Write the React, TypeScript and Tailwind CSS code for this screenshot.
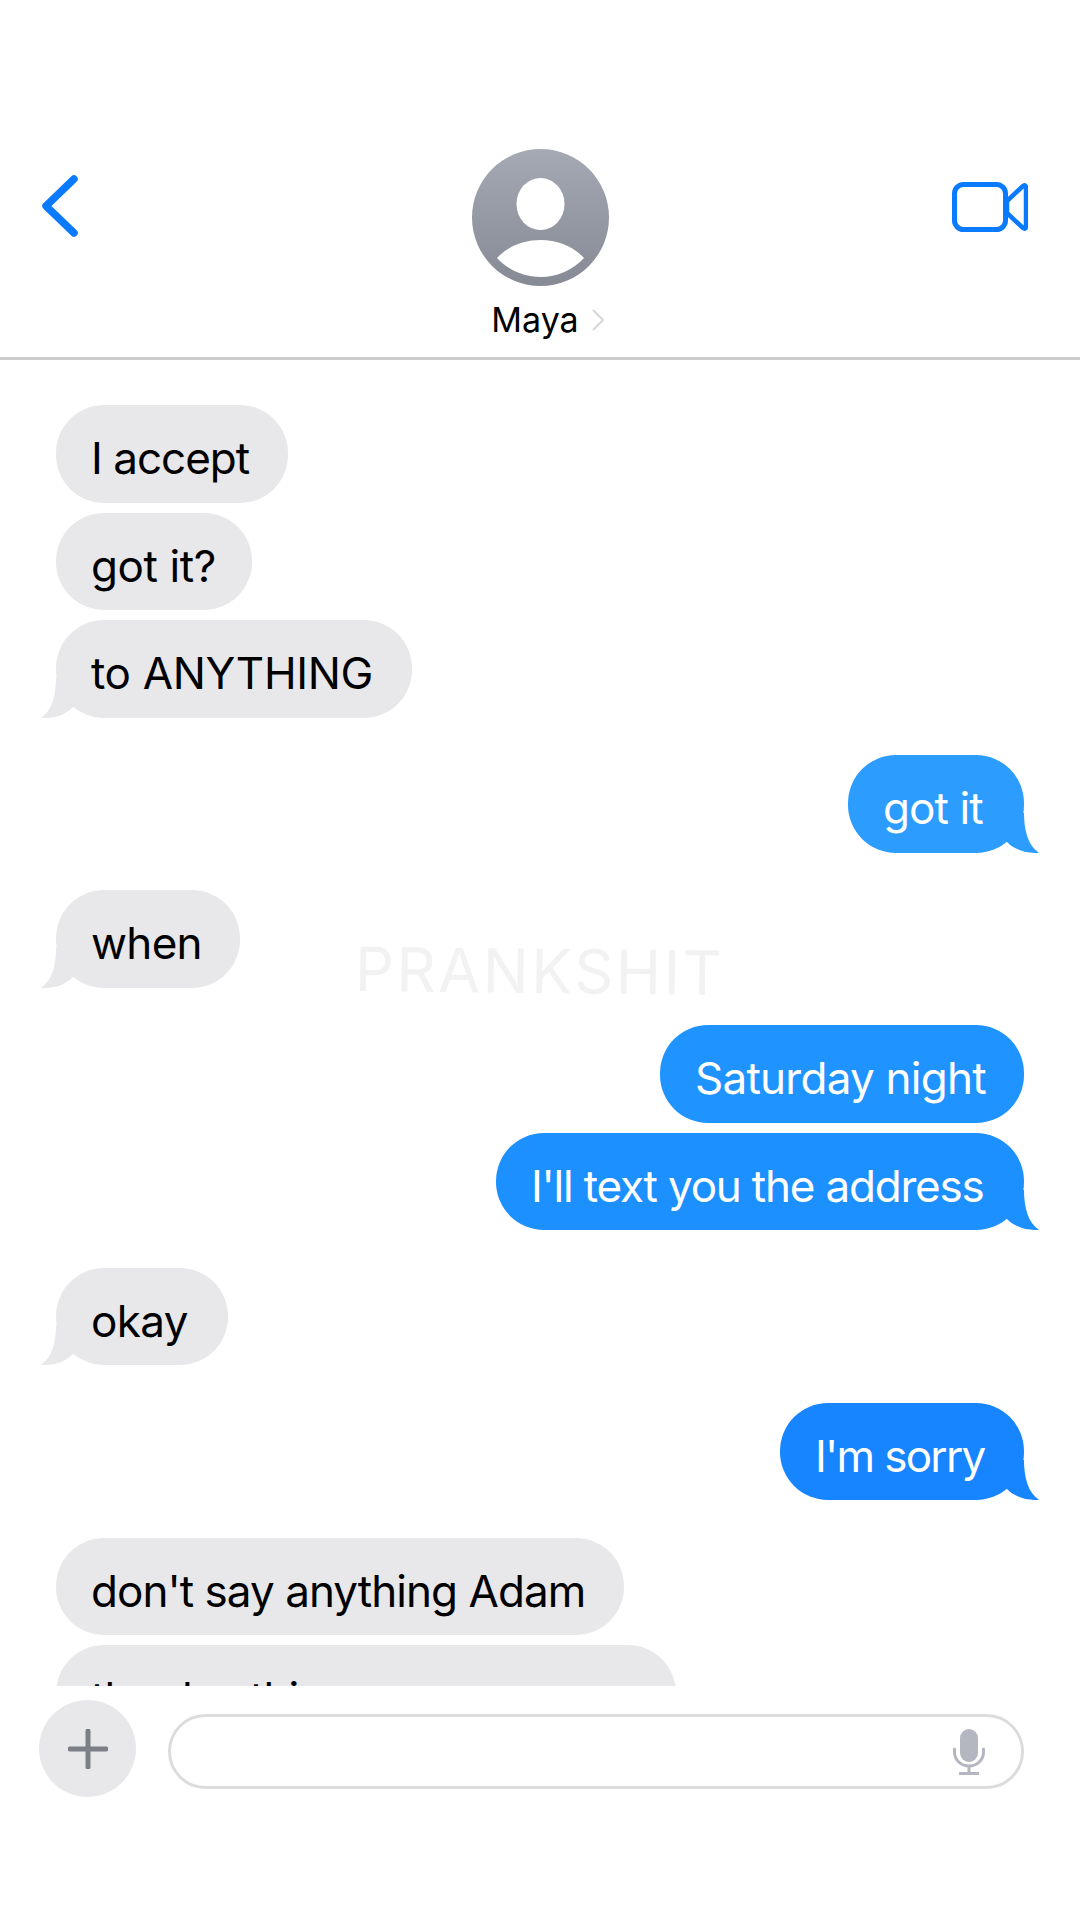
import React from 'react'

type Msg = {
  text: string
  width: string
  track: string
  mine?: boolean
  tail?: string
  color?: string
  gap?: boolean
}

const grey = '#e8e8ea'

const messages: Msg[] = [
  { text: 'I accept', width: 'w-[232px]', track: 'tracking-[-1px]' },
  { text: 'got it?', width: 'w-[196px]', track: 'tracking-[-0.4px]' },
  { text: 'to ANYTHING', width: 'w-[356px]', track: 'tracking-[-0.35px]', tail: grey },
  { text: 'got it', width: 'w-[176px]', track: 'tracking-[-0.9px]', mine: true, tail: '#2d9cff', gap: true, color: 'bg-[#2d9cff]' },
  { text: 'when', width: 'w-[184px]', track: 'tracking-[-0.7px]', tail: grey, gap: true },
  { text: 'Saturday night', width: 'w-[364px]', track: 'tracking-[-0.75px]', mine: true, gap: true, color: 'bg-[#1f93ff]' },
  { text: "I'll text you the address", width: 'w-[528px]', track: 'tracking-[-1.2px]', mine: true, tail: '#1c90ff', color: 'bg-[#1c90ff]' },
  { text: 'okay', width: 'w-[172px]', track: 'tracking-[-0.6px]', tail: grey, gap: true },
  { text: "I'm sorry", width: 'w-[244px]', track: 'tracking-[-1.7px]', mine: true, tail: '#1685ff', gap: true, color: 'bg-[#1685ff]' },
  { text: "don't say anything Adam", width: 'w-[568px]', track: 'tracking-[-0.95px]', gap: true },
  { text: 'the day this never occurs', width: 'w-[620px]', track: 'tracking-[-0.95px]' },
]

const Tail = ({ fill, mine }: { fill: string; mine?: boolean }) => (
  <svg
    viewBox="0 0 40 40"
    className={mine ? 'absolute right-[-15px] bottom-0 w-[40px] h-[40px] -scale-x-100' : 'absolute left-[-15px] bottom-0 w-[40px] h-[40px]'}
  >
    <path d="M15 0 C15 17 11 33 0 39.7 C9 40.6 22 39 32 29 L40 15 L40 0 Z" fill={fill} />
  </svg>
)

const Bubble = ({ msg }: { msg: Msg }) => (
  <div
    className={`relative shrink-0 h-[97.5px] rounded-[48px] flex items-center pl-[35px] pt-[9px] text-[44px] whitespace-nowrap ${msg.width} ${msg.track} ${
      msg.mine ? `self-end text-white ${msg.color}` : 'self-start text-black bg-[#e8e8ea]'
    } ${msg.gap ? 'mt-[37.5px]' : 'mt-[10px] first:mt-0'}`}
  >
    {msg.tail && <Tail fill={msg.tail} mine={msg.mine} />}
    <span className="relative">{msg.text}</span>
  </div>
)

const App = () => {
  return (
    <div className="relative w-[1080px] h-[1920px] bg-white flex flex-col overflow-hidden font-['Inter',sans-serif]">
      <header className="shrink-0 h-[360px] border-b-[3px] border-[#cdcdcf] pt-[149px] px-[42px] grid grid-cols-[1fr_auto_1fr] items-start">
        <svg viewBox="0 0 36 62" className="w-[36px] h-[62px] mt-[26px]" fill="none">
          <path d="M32 4 L4 31 L32 58" stroke="#0a7aff" strokeWidth="7.5" strokeLinecap="round" strokeLinejoin="round" />
        </svg>
        <div className="flex flex-col items-center">
          <svg viewBox="0 0 137 137" className="w-[137px] h-[137px]">
            <defs>
              <linearGradient id="avatarFill" x1="0" y1="0" x2="0" y2="1">
                <stop offset="0" stopColor="#a5a9b4" />
                <stop offset="1" stopColor="#868a94" />
              </linearGradient>
            </defs>
            <circle cx="68.5" cy="68.5" r="68.5" fill="url(#avatarFill)" />
            <ellipse cx="68.5" cy="55" rx="24" ry="26" fill="#fff" />
            <path d="M25 109 C36 97 52 91 68.5 91 C85 91 101 97 112 109 C101 121 85 128 68.5 128 C52 128 36 121 25 109 Z" fill="#fff" />
          </svg>
          <div className="relative mt-[14px] mr-[10px] text-[34px] leading-[40px] text-black">
            Maya
            <svg viewBox="0 0 14 24" className="absolute left-[100px] top-[8px] w-[14px] h-[24px]" fill="none">
              <path d="M2 2 L12 12 L2 22" stroke="#d6d6d8" strokeWidth="2" />
            </svg>
          </div>
        </div>
        <svg viewBox="0 0 76 50" className="justify-self-end w-[76px] h-[50px] mt-[33px] mr-[10px]" fill="none">
          <rect x="2.5" y="2.5" width="51" height="45" rx="9" stroke="#0a7aff" strokeWidth="5" />
          <path d="M55 19 L71 4 Q74 2 74 6 L74 44 Q74 48 71 46 L55 31 Z" stroke="#0a7aff" strokeWidth="4.5" strokeLinejoin="round" />
        </svg>
      </header>

      <main className="relative h-[1326px] shrink-0 overflow-hidden px-[56px] pt-[45px] flex flex-col">
        {messages.map((msg, i) => (
          <Bubble key={i} msg={msg} />
        ))}
      </main>

      <div className="absolute left-[355px] top-[934px] text-[61px] leading-[74px] tracking-[2.5px] text-[#f2f2f3] rotate-[0.6deg] pointer-events-none">
        PRANKSHIT
      </div>

      <footer className="shrink-0 pl-[39px] pr-[56px] pt-[14px] flex items-start gap-[32px]">
        <div className="w-[97px] h-[97px] rounded-full bg-[#e8e8ea] flex items-center justify-center">
          <svg viewBox="0 0 40 40" className="w-[40px] h-[40px]" fill="none">
            <path d="M20 2 V38 M2 20 H38" stroke="#7d7f86" strokeWidth="5" strokeLinecap="round" />
          </svg>
        </div>
        <div className="flex-1 h-[75px] mt-[14px] rounded-[38px] border-[3px] border-[#dcdcde] flex items-center justify-end pr-[36px]">
          <svg viewBox="0 0 32 46" className="w-[32px] h-[46px]" fill="none">
            <rect x="7" y="0" width="18" height="33" rx="9" fill="#b4b7bf" />
            <path d="M1.5 20 V23 C1.5 31 8 37 16 37 C24 37 30.5 31 30.5 23 V20" stroke="#b4b7bf" strokeWidth="3" strokeLinecap="round" />
            <path d="M16 37 V44 M6 44.5 H26" stroke="#b4b7bf" strokeWidth="3" />
          </svg>
        </div>
      </footer>
    </div>
  )
}

export default App
